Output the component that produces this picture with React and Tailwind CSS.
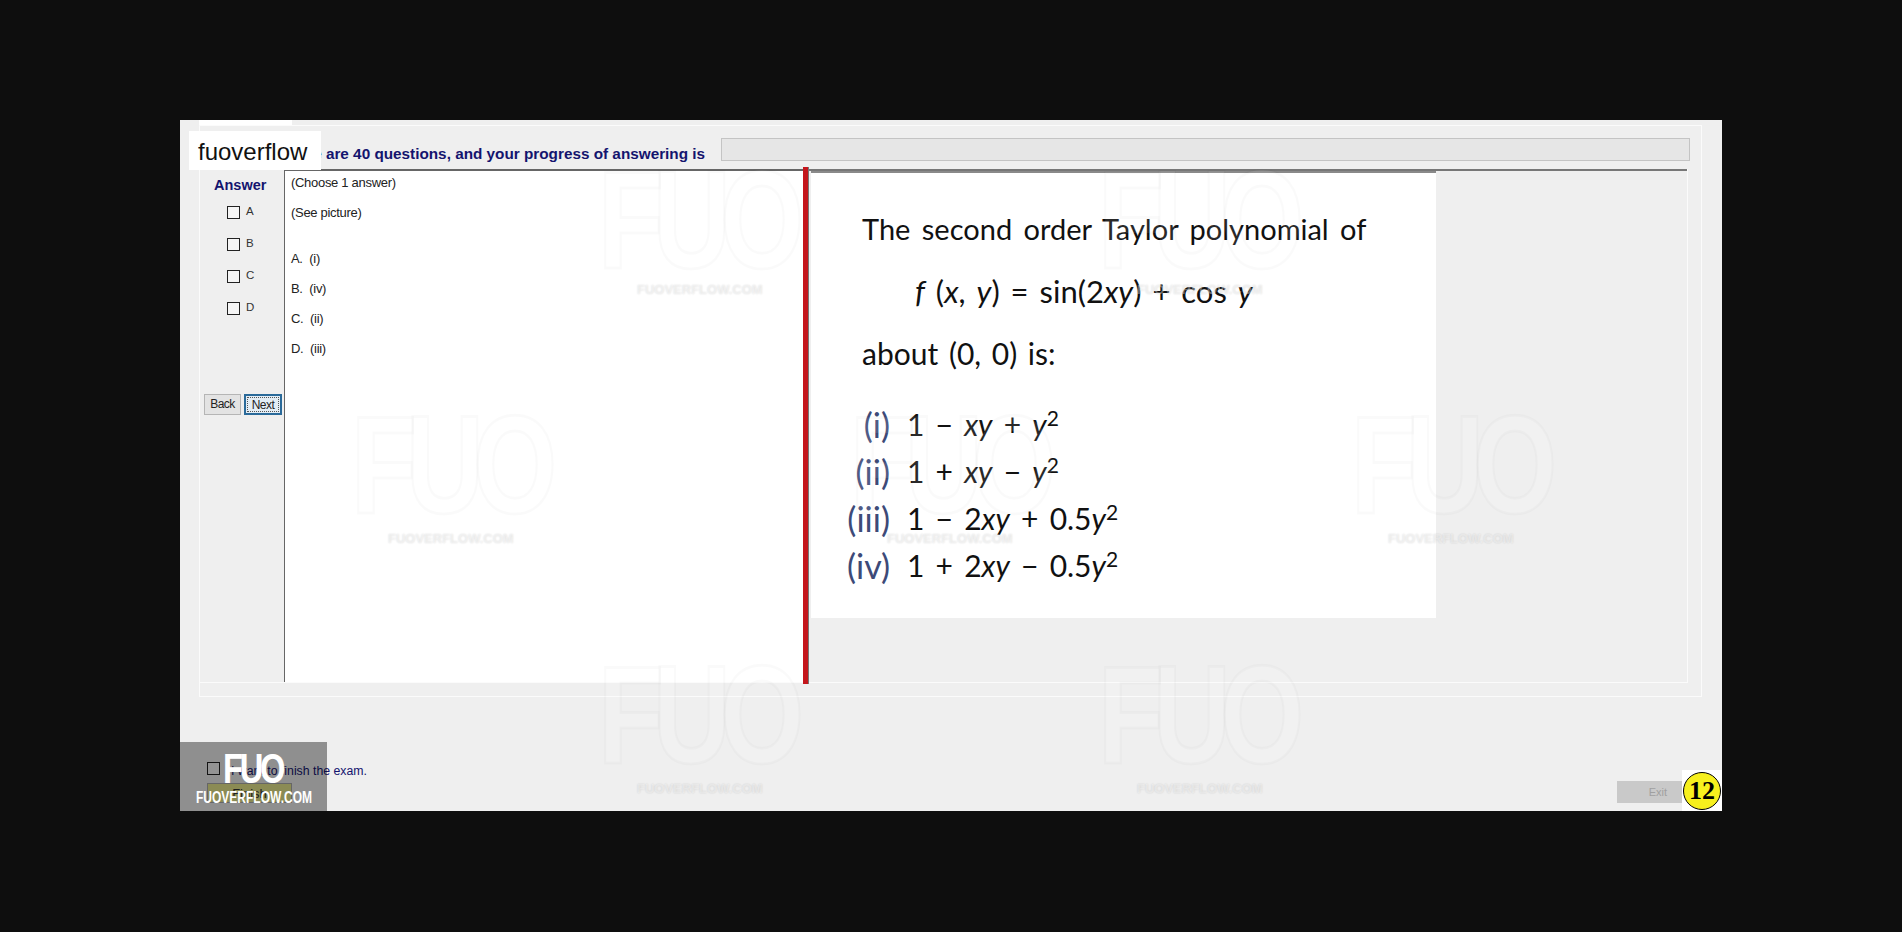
const marks = [
  { logo: "left-[418px] top-[30px]", caption: "left-[457px] top-[163px]" },
  { logo: "left-[918px] top-[30px]", caption: "left-[957px] top-[163px]" },
  { logo: "left-[171px] top-[275px]", caption: "left-[208px] top-[412px]" },
  { logo: "left-[670px] top-[275px]", caption: "left-[707px] top-[412px]" },
  { logo: "left-[1171px] top-[275px]", caption: "left-[1208px] top-[412px]" },
  { logo: "left-[418px] top-[525px]", caption: "left-[457px] top-[662px]" },
  { logo: "left-[918px] top-[525px]", caption: "left-[957px] top-[662px]" },
];

const answers = ["A. (i)", "B. (iv)", "C. (ii)", "D. (iii)"];
const letters = ["A", "B", "C", "D"];

const Y = () => <i>y</i>;
const Sq = () => (
  <>
    <i>y</i>
    <sup className="text-[21px] leading-none">2</sup>
  </>
);

const options = [
  {
    label: "(i)",
    expr: (
      <>
        1 − <i>xy</i> + <Sq />
      </>
    ),
  },
  {
    label: "(ii)",
    expr: (
      <>
        1 + <i>xy</i> − <Sq />
      </>
    ),
  },
  {
    label: "(iii)",
    expr: (
      <>
        1 − 2<i>xy</i> + 0.5<Sq />
      </>
    ),
  },
  {
    label: "(iv)",
    expr: (
      <>
        1 + 2<i>xy</i> − 0.5<Sq />
      </>
    ),
  },
];

const Watermarks = () => (
  <div className="absolute inset-0 overflow-hidden pointer-events-none">
    {marks.map((m, i) => (
      <div key={i}>
        <div
          className={`absolute ${m.logo} origin-left scale-x-[0.77] font-['Liberation_Sans',sans-serif] font-bold text-[140px] leading-none tracking-[-0.1em] text-white/10 [-webkit-text-stroke:3px_rgba(0,0,0,0.018)]`}
        >
          FUO
        </div>
        <div
          className={`absolute ${m.caption} font-['Liberation_Sans',sans-serif] font-bold text-[13px] leading-none text-white/40 [text-shadow:0_0_2px_rgba(0,0,0,0.14)]`}
        >
          FUOVERFLOW.COM
        </div>
      </div>
    ))}
  </div>
);

const Box = ({ className = "" }) => (
  <span className={`block w-[13px] h-[13px] border border-[#222] bg-white/40 shrink-0 ${className}`}></span>
);

export default function App() {
  return (
    <div className="h-[932px] w-full bg-[#0e0e0e] pt-[120px] pl-[180px] overflow-hidden font-['Liberation_Sans',Arial,sans-serif]">
      <div className="relative w-[1542px] h-[691px] bg-[#efefef] pl-[19px] flex flex-col">
        <div className="h-[5px] w-[93px] bg-white shrink-0"></div>

        <div className="w-[1503px] h-[572px] border border-[#fbfbfb] shrink-0 flex flex-col pt-[12px]">
          <div className="flex h-[23px] items-center shrink-0 pl-[80px]">
            <div className="w-[441px] pt-[9px] text-[15.3px] leading-none font-bold text-[#14146e] whitespace-nowrap">
              There are 40 questions, and your progress of answering is
            </div>
            <div className="w-[969px] h-[23px] bg-[#e6e6e6] border border-[#c4c4c4]"></div>
          </div>

          <div className="flex mt-[8px] h-[514px] w-[1488px] border-r border-b border-[#fbfbfb] shrink-0">
            <div className="w-[84px] shrink-0 flex flex-col">
              <div className="mt-[6px] pl-[14px] text-[14.5px] font-bold text-[#14146e]">Answer</div>
              <div className="flex flex-col gap-[19px] mt-[9px] pl-[27px]">
                {letters.map((l) => (
                  <div key={l} className="flex items-center gap-[6px] h-[13px] text-[11.5px] text-[#333]">
                    <Box />
                    <span className="-mt-[2px]">{l}</span>
                  </div>
                ))}
              </div>
              <div className="flex gap-[3px] mt-[79px] pl-[4px]">
                <button className="w-[37px] h-[21px] bg-[#e3e3e3] border border-[#b5b5b5] text-[12px] tracking-[-0.5px] text-[#222]">
                  Back
                </button>
                <button className="w-[38px] h-[21px] bg-[#e3edf5] border-2 border-[#2a6a9a] outline-1 outline-dotted -outline-offset-4 outline-[#555] text-[12px] tracking-[-0.5px] text-[#222]">
                  Next
                </button>
              </div>
            </div>

            <div className="w-[519px] shrink-0 bg-white border-l border-t-2 border-[#666] pl-[6px] pt-[2px] text-[13px] text-[#222] tracking-[-0.3px]">
              <div className="h-[30px]">(Choose 1 answer)</div>
              <div className="h-[46px]">(See picture)</div>
              {answers.map((a) => (
                <div key={a} className="h-[30px] whitespace-pre">
                  {a.replace(" ", "  ")}
                </div>
              ))}
            </div>

            <div className="w-[6px] shrink-0 bg-[#c4161c] -mt-[2px] mb-[-2px] border-r border-[#777]"></div>

            <div className="flex-1 pl-[2px] border-t-2 border-[#777]">
              <div className="w-[625px] h-[447px] bg-white border-t-[2px] border-[#8a8a8a] pl-[51px] pt-[36px] text-[29px] text-[#111] font-['Lato',sans-serif] [word-spacing:4px]">
                <div className="h-[40px] leading-[40px] whitespace-nowrap">
                  The second order Taylor polynomial of
                </div>
                <div className="h-[64px] mt-[10px] pl-[53px] leading-[64px] whitespace-nowrap text-[31px] [word-spacing:3px]">
                  <i>f</i> (<i>x</i>, <Y />) = sin(2<i>xy</i>) + cos <Y />
                </div>
                <div className="h-[58px] mt-[1px] leading-[58px] whitespace-nowrap text-[30px] [word-spacing:3px]">
                  about (0, 0) is:
                </div>
                <div className="mt-[19px] -ml-[51px] grid grid-cols-[79px_1fr] gap-x-[17px]">
                  {options.map((o) => (
                    <div key={o.label} className="contents">
                      <div className="h-[47px] leading-[47px] text-right text-[34px] text-[#3d4a78]">{o.label}</div>
                      <div className="h-[47px] leading-[47px] whitespace-nowrap text-[30px] [word-spacing:3.5px]">
                        {o.expr}
                      </div>
                    </div>
                  ))}
                </div>
              </div>
            </div>
          </div>
        </div>

        <div className="flex justify-between items-end w-[1503px] flex-1 pl-[8px] pr-[20px] pb-[8px]">
          <div className="flex flex-col">
            <div className="flex items-center gap-[11px] text-[12.3px] text-[#14146e]">
              <Box className="-translate-y-[2px]" />
              <span>I want to finish the exam.</span>
            </div>
            <button className="w-[85px] h-[20px] mt-[3px] bg-[#e8e88c] border border-[#aaa] text-[13px] text-[#333]">
              Finish
            </button>
          </div>
          <button className="w-[65px] h-[22px] bg-[#c9c9c9] text-right pr-[15px] text-[11px] text-[#a0a0a0]">
            Exit
          </button>
        </div>

        <Watermarks />

        <div className="absolute left-[9px] top-[11px] w-[132px] h-[39px] bg-white flex items-center pl-[9px] pt-[2px] text-[24px] text-[#111] font-['Liberation_Sans',sans-serif]">
          fuoverflow
        </div>

        <div className="absolute left-0 bottom-0 w-[147px] h-[69px] bg-black/40 text-white">
          <div className="absolute left-[43px] top-[6px] origin-left scale-x-[0.78] text-[42px] leading-none font-bold tracking-[-0.1em]">
            FUO
          </div>
          <div className="absolute left-[16px] top-[48px] w-[150px] origin-left scale-x-[0.75] text-[16px] leading-none font-bold whitespace-nowrap">
            FUOVERFLOW.COM
          </div>
        </div>

        <div className="absolute right-0 bottom-0 w-[40px] h-[41px] bg-white flex items-center justify-center">
          <div className="w-[38px] h-[38px] rounded-full bg-[#f7f01e] border border-black flex items-center justify-center font-['Liberation_Serif',serif] font-bold text-[26px] text-black">
            12
          </div>
        </div>
      </div>
    </div>
  );
}
